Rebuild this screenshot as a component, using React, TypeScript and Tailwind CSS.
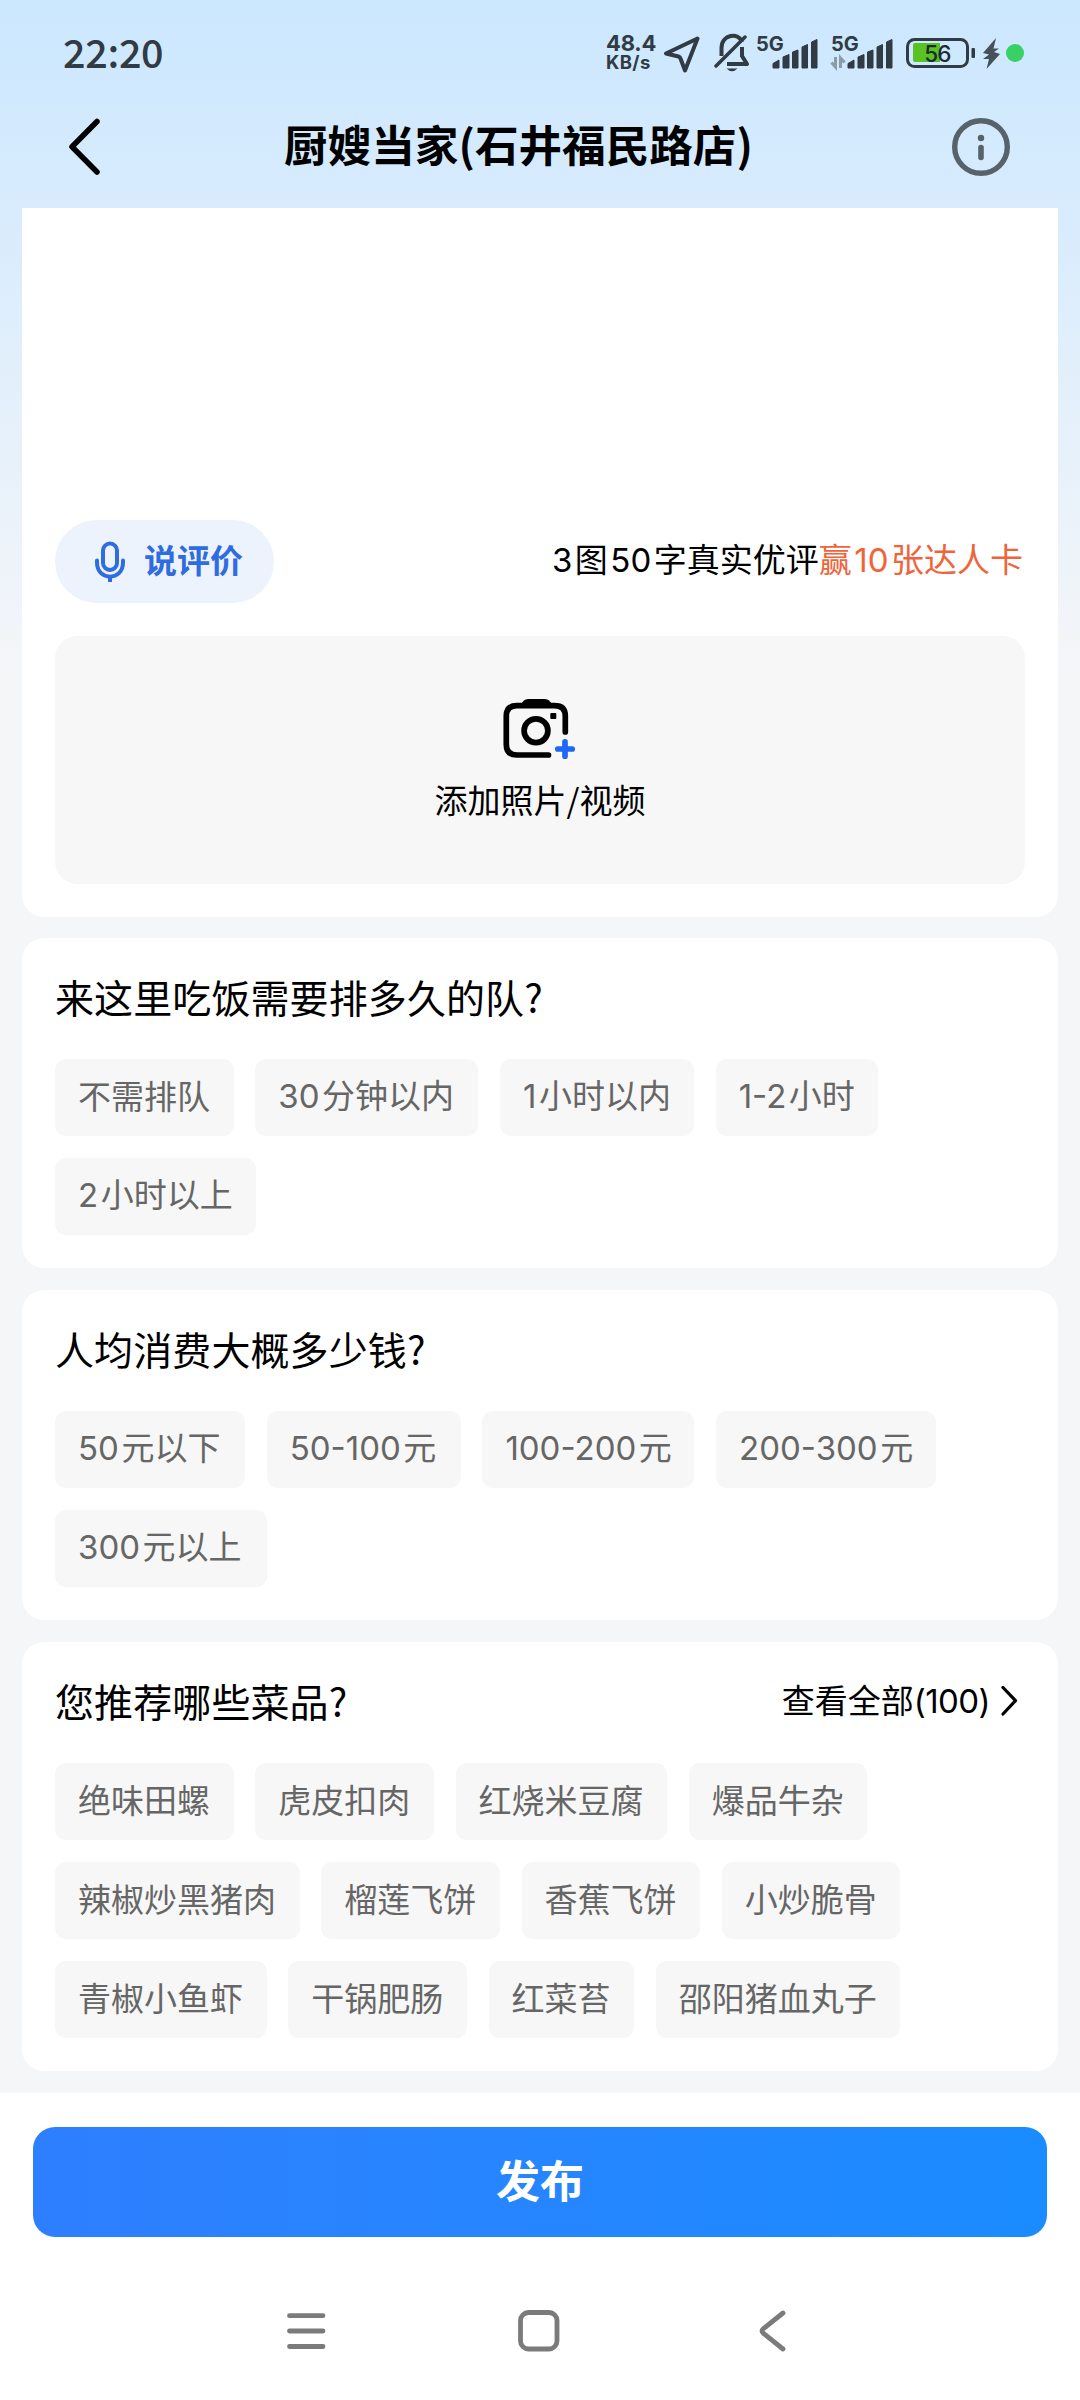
import * as React from "react";

interface Option {
  label: string;
  /** Fixed width class for labels that mix digits and characters. */
  width?: string;
}

const QUEUE_OPTIONS: Option[] = [
  { label: "不需排队" },
  { label: "30分钟以内", width: "w-[223px]" },
  { label: "1小时以内", width: "w-[194px]" },
  { label: "1-2小时", width: "w-[162px]" },
  { label: "2小时以上", width: "w-[201px]" },
];

const PRICE_OPTIONS: Option[] = [
  { label: "50元以下", width: "w-[190px]" },
  { label: "50-100元", width: "w-[194px]" },
  { label: "100-200元", width: "w-[212px]" },
  { label: "200-300元", width: "w-[220px]" },
  { label: "300元以上", width: "w-[212px]" },
];

const DISH_OPTIONS: Option[] = [
  { label: "绝味田螺" },
  { label: "虎皮扣肉" },
  { label: "红烧米豆腐" },
  { label: "爆品牛杂" },
  { label: "辣椒炒黑猪肉" },
  { label: "榴莲飞饼" },
  { label: "香蕉飞饼" },
  { label: "小炒脆骨" },
  { label: "青椒小鱼虾" },
  { label: "干锅肥肠" },
  { label: "红菜苔" },
  { label: "邵阳猪血丸子" },
];

/** Sets digit runs in the Latin face, with a little air next to the characters. */
function Mixed({ text }: { text: string }) {
  const parts = text.split(/([\d-]+)/);
  return (
    <>
      {parts.map((part, i) =>
        i % 2 ? (
          <span
            key={i}
            className={`mr-[2.5px] font-['Inter',sans-serif] ${parts[i - 1] ? "ml-[2.5px]" : ""}`}
          >
            {part}
          </span>
        ) : (
          part
        ),
      )}
    </>
  );
}

function SignalBars() {
  return (
    <path
      d="M16 68V63.5L22 60V68ZM26 68V57L32 54.5V68ZM35.5 68V52L41 50V68ZM45 68V47L50.500 44.500V68ZM54.500 68V42L60 39.500V68Z"
      fill="#303b43"
      stroke="#303b43"
      strokeWidth="1"
      strokeLinejoin="round"
    />
  );
}

function StatusBar() {
  return (
    <div className="flex h-[98px] shrink-0 items-start justify-between pt-[33px] pr-[56px] pl-[63px] text-[#303b43]">
      <span className="-mt-[2px] text-[39.5px] leading-[40px] font-medium tracking-[-0.3px]">22:20</span>
      <div className="flex h-[40px] items-start font-['Inter',sans-serif]">
        <div className="mr-[8px] flex w-[49px] flex-col font-bold">
          <span className="text-[22px] leading-[20px] tracking-[-0.2px]">48.4</span>
          <span className="text-[18.5px] leading-[19px] tracking-[0.4px]">KB/s</span>
        </div>
        <svg width="38" height="40" viewBox="0 0 38 40" className="mr-[13px]" fill="none">
          <path
            d="M34.500 5.500L3 20.500L15.500 23.500Q17 24 17.500 25.500L22 37.500Z"
            stroke="#303b43"
            strokeWidth="4"
            strokeLinejoin="round"
          />
        </svg>
        <svg width="36" height="40" viewBox="0 0 36 40" className="mr-[7px]" fill="none">
          <path d="M7.500 23V15C7.500 1 25 -1 28 9" stroke="#303b43" strokeWidth="4" />
          <path d="M28 14V23L33 31H13" stroke="#303b43" strokeWidth="4" strokeLinejoin="round" />
          <path d="M2 33L31 4" stroke="#303b43" strokeWidth="3.500" strokeLinecap="round" />
          <path d="M12.500 35.500H23.500Q18 41 12.500 35.500Z" fill="#303b43" />
        </svg>
        <svg width="62" height="40" viewBox="0 33 62 40" className="mr-[13px] overflow-visible">
          <text x="-1" y="51" fontSize="20" fontWeight="700" fill="#303b43">
            5G
          </text>
          <SignalBars />
        </svg>
        <svg width="64" height="40" viewBox="0 33 64 40" className="mr-[10px] overflow-visible">
          <text x="-1" y="51" fontSize="20" fontWeight="700" fill="#303b43">
            5G
          </text>
          <SignalBars />
          <path d="M3.500 57V67L-0.500 62.500M8.500 68V58L12.500 62.500" stroke="#8b9ba8" strokeWidth="3" fill="none" />
        </svg>
        <svg width="70" height="40" viewBox="0 0 70 40" className="mr-[7px]">
          <rect x="1.500" y="6.500" width="60" height="27" rx="7" fill="none" stroke="#303b43" strokeWidth="3" />
          <path d="M9 10H34V29H9Q7 29 7 27V12Q7 10 9 10Z" fill="#58c322" />
          <rect x="65.500" y="15" width="3.500" height="10" rx="1" fill="#303b43" />
          <text x="31.500" y="28.500" fontSize="22.500" textAnchor="middle" fontWeight="500" fill="#1e2a2c" letterSpacing="-0.800">
            56
          </text>
        </svg>
        <svg width="17" height="40" viewBox="0 0 17 40" className="mr-[6px]">
          <path d="M13 5L0 20L6 21.500L0 26H6L3.500 36L17 21L11 19L16 15.500H10.500Z" fill="#46515a" />
        </svg>
        <span className="mt-[11px] h-[18px] w-[18px] rounded-full bg-[#38d163]" />
      </div>
    </div>
  );
}

function TitleBar() {
  return (
    <div className="flex h-[110px] shrink-0 items-start justify-between pr-[70px] pl-[66px]">
      <svg width="36" height="60" viewBox="0 0 36 60" className="mt-[19px]" fill="none">
        <path d="M31 4.500L6 29.700L31 55" stroke="#000" strokeWidth="5.500" strokeLinecap="round" strokeLinejoin="round" />
      </svg>
      <h1 className="mt-[15px] mr-[17px] text-[43.6px] leading-[60px] font-bold text-black">厨嫂当家(石井福民路店)</h1>
      <svg width="58" height="58" viewBox="0 0 58 58" className="mt-[20px]" fill="none">
        <circle cx="29" cy="29" r="26.300" stroke="#58626b" strokeWidth="5.400" />
        <circle cx="29" cy="20" r="3.200" fill="#58626b" />
        <path d="M29 29.500V39.500" stroke="#58626b" strokeWidth="5.600" strokeLinecap="round" />
      </svg>
    </div>
  );
}

function MicIcon() {
  return (
    <svg width="30" height="42" viewBox="0 0 30 42" fill="none" stroke="#2f6cdf" strokeWidth="4">
      <rect x="8" y="2.500" width="14" height="26.500" rx="7" />
      <path d="M2 19.500V21.500C2 40.500 28 40.500 28 21.500V19.500" strokeLinecap="round" />
      <path d="M15 35V41" />
    </svg>
  );
}

function CameraPlusIcon() {
  return (
    <svg width="74" height="62" viewBox="2 4 74 62" className="-ml-[2px]" fill="none">
      <path
        d="M48.500 60H17Q6.300 60 6.300 49.500V21Q6.300 10.700 17 10.700H54.500Q65.300 10.700 65.300 21V37"
        stroke="#000"
        strokeWidth="5.700"
        strokeLinecap="round"
      />
      <path d="M19 11L24 5.500Q25.500 4 28 4H45Q47.500 4 49 5.500L54 11Z" fill="#000" />
      <circle cx="36" cy="35.700" r="11.900" stroke="#000" strokeWidth="5.700" />
      <rect x="50.300" y="18" width="6" height="6" rx="1" fill="#000" />
      <path d="M65 46.800V61.200M57.800 54H72.200" stroke="#1f68f5" strokeWidth="5.700" strokeLinecap="round" />
    </svg>
  );
}

function ReviewCard() {
  return (
    <section className="-mb-px flex h-[709px] flex-col justify-end rounded-b-[22px] bg-white px-[33px] pb-[33px]">
      <div className="flex h-[83px] items-center justify-between">
        <button type="button" className="flex h-full w-[219px] items-center rounded-full bg-[#edf3fc] pl-[40px]">
          <MicIcon />
          <span className="ml-[19px] pb-[5px] text-[33px] leading-[40px] font-bold text-[#2f6cdf]">说评价</span>
        </button>
        <p className="pr-[2px] pb-[5px] text-[33px] leading-[40px] whitespace-nowrap text-black">
          <Mixed text="3图50字真实优评" />
          <span className="text-[#f0643c]">
            <Mixed text="赢10张达人卡" />
          </span>
        </p>
      </div>
      <button
        type="button"
        className="mt-[33px] flex h-[248px] flex-col items-center rounded-[22px] bg-[#f7f7f7] pt-[63px] text-black"
      >
        <CameraPlusIcon />
        <span className="mt-[18px] text-[33px] leading-[40px]">添加照片/视频</span>
      </button>
    </section>
  );
}

function QuestionCard({
  title,
  options,
  action,
}: {
  title: string;
  options: Option[];
  action?: React.ReactNode;
}) {
  return (
    <section className="rounded-[22px] bg-white px-[33px] pb-[33px]">
      <div className="flex h-[121px] items-center justify-between pb-[5px]">
        <h2 className="text-[39px] leading-[48px] tracking-[0.1px] text-black">{title}</h2>
        {action}
      </div>
      <div className="flex flex-wrap gap-x-[21.7px] gap-y-[22px]">
        {options.map((option) => (
          <button
            key={option.label}
            type="button"
            className={`flex h-[77px] items-center rounded-[11px] bg-[#f7f7f7] pb-[5px] pl-[23px] text-[33px] leading-[40px] whitespace-nowrap text-[#666] ${option.width ?? "pr-[23.6px]"}`}
          >
            <span>
              <Mixed text={option.label} />
            </span>
          </button>
        ))}
      </div>
    </section>
  );
}

function ViewAll() {
  return (
    <button type="button" className="flex items-center pr-[7px] text-[33px] leading-[40px] text-black">
      <span>
        查看全部<span className="font-['Inter',sans-serif] tracking-[-0.6px]">(100)</span>
      </span>
      <svg width="17" height="32" viewBox="0 0 17 32" className="mt-[2px] ml-[11px]" fill="none">
        <path d="M2 2.500L14.500 15.700L2 29" stroke="#000" strokeWidth="3.200" strokeLinecap="round" strokeLinejoin="round" />
      </svg>
    </button>
  );
}

function SystemNav() {
  return (
    <div className="flex h-[163px] items-start justify-between pt-[70px] pr-[292px] pl-[285px]">
      <svg width="42" height="48" viewBox="0 0 42 48" stroke="#7b7b7b" strokeWidth="4.800" strokeLinecap="round">
        <path d="M4.500 8.700H38M4.500 24H38M4.500 39.500H38" />
      </svg>
      <svg width="44" height="48" viewBox="0 0 44 48" className="mr-[7px]" fill="none">
        <rect x="3.500" y="5.500" width="36.500" height="36.500" rx="8" stroke="#7b7b7b" strokeWidth="4.800" />
      </svg>
      <svg width="30" height="48" viewBox="0 0 30 48" fill="none">
        <path d="M25 6L5.500 21.500Q2.500 24 5.500 26.500L25 42" stroke="#7b7b7b" strokeWidth="4.800" strokeLinecap="round" />
      </svg>
    </div>
  );
}

export default function App() {
  return (
    <div className="flex h-[2400px] w-[1080px] flex-col overflow-hidden bg-[#f5f6f8] bg-[linear-gradient(180deg,#cbe7ff_0px,#f5f6f8_680px)] font-['Noto_Sans_CJK_SC',sans-serif]">
      <StatusBar />
      <TitleBar />
      <main className="flex flex-col gap-[22px] px-[22px]">
        <ReviewCard />
        <QuestionCard title="来这里吃饭需要排多久的队?" options={QUEUE_OPTIONS} />
        <QuestionCard title="人均消费大概多少钱?" options={PRICE_OPTIONS} />
        <QuestionCard title="您推荐哪些菜品?" options={DISH_OPTIONS} action={<ViewAll />} />
      </main>
      <footer className="mt-[22px] flex-1 bg-white pt-[34px]">
        <div className="px-[33px]">
          <button
            type="button"
            className="h-[110px] w-full rounded-[22px] bg-linear-to-r from-[#2e7fff] to-[#1a8cff] pb-[6px] text-[44px] leading-[60px] font-bold text-white"
          >
            发布
          </button>
        </div>
        <SystemNav />
      </footer>
    </div>
  );
}
